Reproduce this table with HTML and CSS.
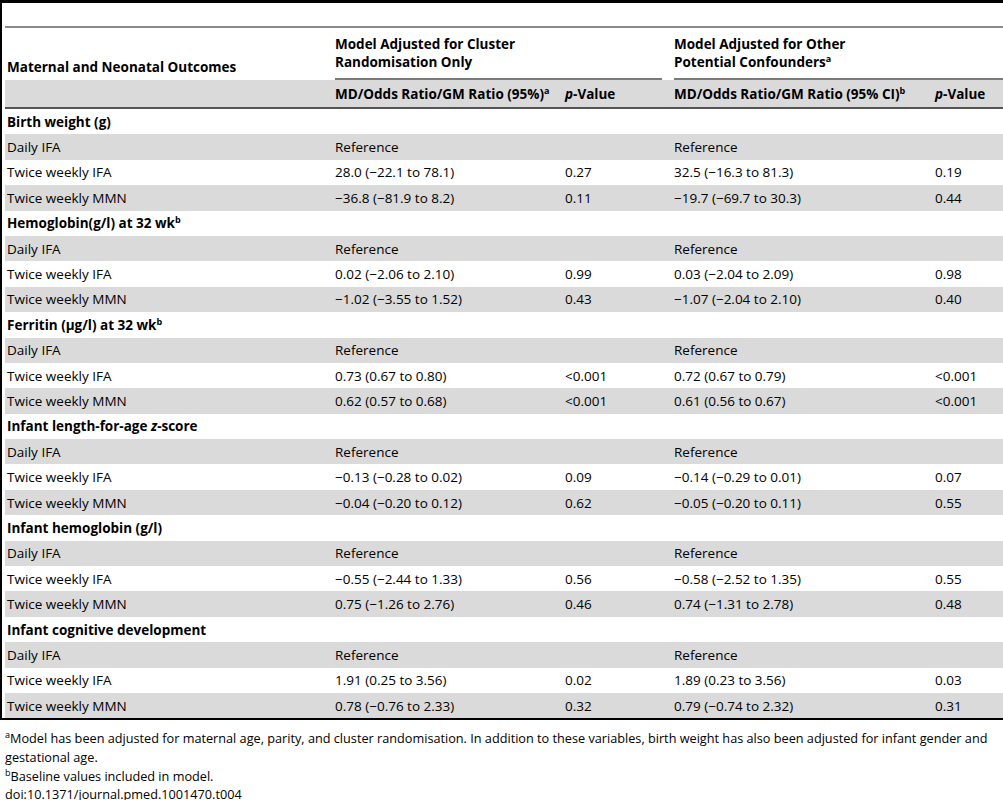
FILE: index.html
```html
<!DOCTYPE html>
<html lang="en">
<head>
    <meta charset="UTF-8">
    <title>Table 4</title>
    <link rel="stylesheet" href="styles.css">
</head>
<body>
    <div class="frame">
        <div class="title-gap"></div>
        <table>
            <colgroup>
                <col class="c1">
                <col class="c2">
                <col class="c3">
                <col class="c4">
                <col class="c5">
            </colgroup>
            <thead>
                <tr class="head-top">
                    <th class="outcomes">Maternal and Neonatal Outcomes</th>
                    <th colspan="2" class="group first"><div>Model Adjusted for Cluster<br>Randomisation Only</div></th>
                    <th colspan="2" class="group last"><div>Model Adjusted for Other<br>Potential Confounders<sup>a</sup></div></th>
                </tr>
                <tr class="head-sub">
                    <th></th>
                    <th>MD/Odds Ratio/GM Ratio (95%)<sup>a</sup></th>
                    <th><i>p</i>-Value</th>
                    <th>MD/Odds Ratio/GM Ratio (95% CI)<sup>b</sup></th>
                    <th><i>p</i>-Value</th>
                </tr>
            </thead>
            <tbody>
                <tr class="cat"><td colspan="5">Birth weight (g)</td></tr>
                <tr class="alt"><td>Daily IFA</td><td>Reference</td><td></td><td>Reference</td><td></td></tr>
                <tr><td>Twice weekly IFA</td><td>28.0 (&minus;22.1 to 78.1)</td><td>0.27</td><td>32.5 (&minus;16.3 to 81.3)</td><td>0.19</td></tr>
                <tr class="alt"><td>Twice weekly MMN</td><td>&minus;36.8 (&minus;81.9 to 8.2)</td><td>0.11</td><td>&minus;19.7 (&minus;69.7 to 30.3)</td><td>0.44</td></tr>

                <tr class="cat"><td colspan="5">Hemoglobin(g/l) at 32 wk<sup>b</sup></td></tr>
                <tr class="alt"><td>Daily IFA</td><td>Reference</td><td></td><td>Reference</td><td></td></tr>
                <tr><td>Twice weekly IFA</td><td>0.02 (&minus;2.06 to 2.10)</td><td>0.99</td><td>0.03 (&minus;2.04 to 2.09)</td><td>0.98</td></tr>
                <tr class="alt"><td>Twice weekly MMN</td><td>&minus;1.02 (&minus;3.55 to 1.52)</td><td>0.43</td><td>&minus;1.07 (&minus;2.04 to 2.10)</td><td>0.40</td></tr>

                <tr class="cat"><td colspan="5">Ferritin (&mu;g/l) at 32 wk<sup>b</sup></td></tr>
                <tr class="alt"><td>Daily IFA</td><td>Reference</td><td></td><td>Reference</td><td></td></tr>
                <tr><td>Twice weekly IFA</td><td>0.73 (0.67 to 0.80)</td><td>&lt;0.001</td><td>0.72 (0.67 to 0.79)</td><td>&lt;0.001</td></tr>
                <tr class="alt"><td>Twice weekly MMN</td><td>0.62 (0.57 to 0.68)</td><td>&lt;0.001</td><td>0.61 (0.56 to 0.67)</td><td>&lt;0.001</td></tr>

                <tr class="cat"><td colspan="5">Infant length-for-age <i>z</i>-score</td></tr>
                <tr class="alt"><td>Daily IFA</td><td>Reference</td><td></td><td>Reference</td><td></td></tr>
                <tr><td>Twice weekly IFA</td><td>&minus;0.13 (&minus;0.28 to 0.02)</td><td>0.09</td><td>&minus;0.14 (&minus;0.29 to 0.01)</td><td>0.07</td></tr>
                <tr class="alt"><td>Twice weekly MMN</td><td>&minus;0.04 (&minus;0.20 to 0.12)</td><td>0.62</td><td>&minus;0.05 (&minus;0.20 to 0.11)</td><td>0.55</td></tr>

                <tr class="cat"><td colspan="5">Infant hemoglobin (g/l)</td></tr>
                <tr class="alt"><td>Daily IFA</td><td>Reference</td><td></td><td>Reference</td><td></td></tr>
                <tr><td>Twice weekly IFA</td><td>&minus;0.55 (&minus;2.44 to 1.33)</td><td>0.56</td><td>&minus;0.58 (&minus;2.52 to 1.35)</td><td>0.55</td></tr>
                <tr class="alt"><td>Twice weekly MMN</td><td>0.75 (&minus;1.26 to 2.76)</td><td>0.46</td><td>0.74 (&minus;1.31 to 2.78)</td><td>0.48</td></tr>

                <tr class="cat"><td colspan="5">Infant cognitive development</td></tr>
                <tr class="alt"><td>Daily IFA</td><td>Reference</td><td></td><td>Reference</td><td></td></tr>
                <tr><td>Twice weekly IFA</td><td>1.91 (0.25 to 3.56)</td><td>0.02</td><td>1.89 (0.23 to 3.56)</td><td>0.03</td></tr>
                <tr class="alt"><td>Twice weekly MMN</td><td>0.78 (&minus;0.76 to 2.33)</td><td>0.32</td><td>0.79 (&minus;0.74 to 2.32)</td><td>0.31</td></tr>
            </tbody>
        </table>
    </div>
    <div class="notes">
        <p><sup>a</sup>Model has been adjusted for maternal age, parity, and cluster randomisation. In addition to these variables, birth weight has also been adjusted for infant gender and gestational age.</p>
        <p><sup>b</sup>Baseline values included in model.</p>
        <p>doi:10.1371/journal.pmed.1001470.t004</p>
    </div>
</body>
</html>
```

FILE: styles.css
```css
body {
    margin: 0;
    font-family: "Open Sans", Arial, sans-serif;
    font-size: 13.5px;
    color: #000;
    background-color: #fff;
    width: 1003px;
}
.frame {
    border-top: 3px solid #000;
    border-left: 2px solid #000;
    border-bottom: 2px solid #000;
    padding-left: 3px;
}
.title-gap {
    height: 23px;
}
table {
    width: 998px;
    table-layout: fixed;
    border-collapse: collapse;
    border-top: 2px solid #8a8a8a;
}
.c1 { width: 328px; }
.c2 { width: 230px; }
.c3 { width: 109px; }
.c4 { width: 261px; }
.c5 { width: 70px; }
th, td {
    padding: 0 2px;
    line-height: 18px;
    text-align: left;
    white-space: nowrap;
}
th {
    font-weight: bold;
}
.head-top th {
    vertical-align: bottom;
    padding-top: 7px;
}
.head-top .outcomes {
    padding-bottom: 4px;
}
.head-top .group {
    padding-bottom: 0;
}
.head-top .group.first {
    padding-right: 10px;
}
.head-top .group.last {
    padding-right: 0;
}
.group div {
    padding-bottom: 7px;
    border-bottom: 2px solid #7a7a7a;
}
.head-sub {
    background-color: #dadada;
    border-bottom: 2px solid #555;
}
.head-sub th {
    height: 27px;
}
tbody td {
    height: 25.4px;
}
.cat td {
    font-weight: bold;
}
.alt {
    background-color: #dadada;
}
sup {
    font-size: 9px;
    line-height: 0;
    vertical-align: 5px;
}
.notes {
    padding: 9px 0 0 5px;
    font-size: 12.7px;
    line-height: 18.7px;
}
.notes p {
    margin: 0;
}
```
